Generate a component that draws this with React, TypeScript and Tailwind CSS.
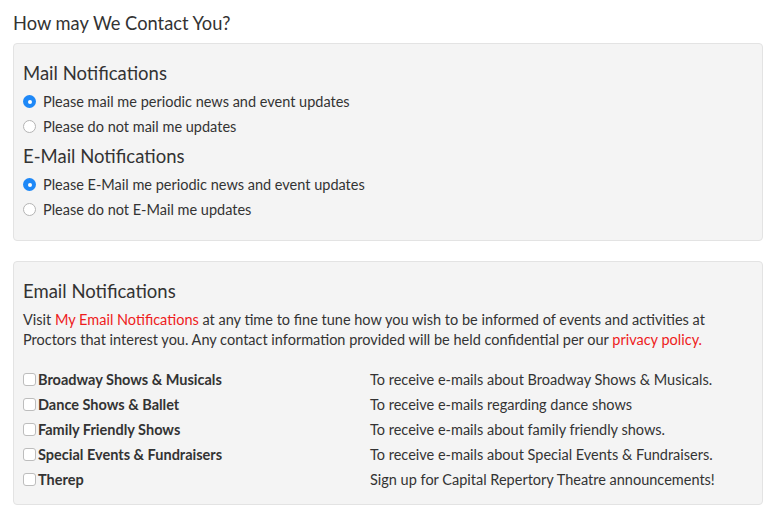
const Radio = ({ checked, label }: { checked?: boolean; label: string }) => (
  <label className="flex items-center h-[25px] gap-[7px]">
    {checked ? (
      <span className="w-[13px] h-[13px] rounded-full bg-[#1e88f7] flex items-center justify-center">
        <span className="w-[4px] h-[4px] rounded-full bg-white" />
      </span>
    ) : (
      <span className="w-[13px] h-[13px] rounded-full border border-[#b4b4b4] bg-white" />
    )}
    <span>{label}</span>
  </label>
);

const topics = [
  ["Broadway Shows & Musicals", "To receive e-mails about Broadway Shows & Musicals."],
  ["Dance Shows & Ballet", "To receive e-mails regarding dance shows"],
  ["Family Friendly Shows", "To receive e-mails about family friendly shows."],
  ["Special Events & Fundraisers", "To receive e-mails about Special Events & Fundraisers."],
  ["Therep", "Sign up for Capital Repertory Theatre announcements!"],
];

const App = () => {
  return (
    <div className="w-[777px] h-[519px] bg-white px-[13px] pt-[11px] text-[14.5px] leading-[20px] text-[#333] font-['Lato','Open_Sans',sans-serif]">
      <h3 className="text-[18.3px] leading-[24px] mb-[8px]">How may We Contact You?</h3>

      <div className="w-[750px] h-[198px] bg-[#f4f4f4] border border-[#e3e3e3] rounded-[4px] px-[9px] pt-[17px]">
        <h4 className="text-[18.5px] leading-[24px] mb-[4px]">Mail Notifications</h4>
        <Radio checked label="Please mail me periodic news and event updates" />
        <Radio label="Please do not mail me updates" />
        <h4 className="text-[18.5px] leading-[24px] mt-[5px] mb-[4px]">E-Mail Notifications</h4>
        <Radio checked label="Please E-Mail me periodic news and event updates" />
        <Radio label="Please do not E-Mail me updates" />
      </div>

      <div className="w-[750px] h-[244px] mt-[20px] bg-[#f4f4f4] border border-[#e3e3e3] rounded-[4px] px-[9px] pt-[17px]">
        <h4 className="text-[18.5px] leading-[24px] mb-[7px]">Email Notifications</h4>
        <p>
          Visit <a className="text-[#ee1c1c]">My Email Notifications</a> at any time to fine tune how you wish to be informed of events and activities at
          <br />
          Proctors that interest you. Any contact information provided will be held confidential per our{" "}
          <a className="text-[#ee1c1c]">privacy policy.</a>
        </p>
        <div className="mt-[17px]">
          {topics.map(([name, desc]) => (
            <div key={name} className="flex items-center h-[25px]">
              <div className="w-[347px] flex items-center gap-[2px]">
                <span className="w-[13px] h-[13px] rounded-[3px] border border-[#bdbdbd] bg-white" />
                <span className="font-bold">{name}</span>
              </div>
              <span>{desc}</span>
            </div>
          ))}
        </div>
      </div>
    </div>
  );
};

export default App;
